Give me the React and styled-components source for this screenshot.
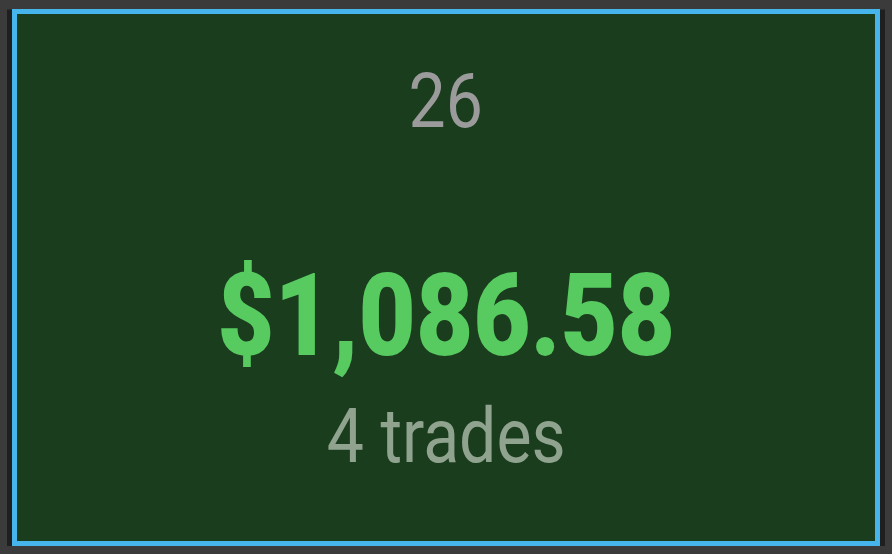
import React from "react";
import styled, { createGlobalStyle } from "styled-components";

const GlobalStyle = createGlobalStyle`
  html, body {
    margin: 0;
    padding: 0;
    background: #3b3b3b;
  }
  body {
    font-family: Roboto, "Liberation Sans", sans-serif;
  }
`;

const Page = styled.div`
  width: 892px;
  height: 554px;
  box-sizing: border-box;
  padding: 9px 7px 8px 7px;
  display: flex;
`;

const Shade = styled.div`
  flex: 1;
  display: flex;
  padding: 0 5px;
  background: linear-gradient(#3b3b3b 0, #1f1f1f 1px);
`;

const Card = styled.div`
  flex: 1;
  box-sizing: border-box;
  border: 5px solid #45b5ec;
  background: #1a3d1e;
  display: flex;
  flex-direction: column;
  align-items: center;
  padding-top: 49px;
`;

const Label = styled.div`
  font-size: ${(p) => p.size}px;
  font-weight: ${(p) => p.weight || 400};
  color: ${(p) => p.color};
  line-height: 1;
  margin-top: ${(p) => p.gap || 0}px;
  transform: scaleX(${(p) => p.squeeze});
  white-space: nowrap;
`;

export default function App() {
  return (
    <>
      <GlobalStyle />
      <Page>
        <Shade>
          <Card>
            <Label size={76} color="#9b9b9b" squeeze={0.87}>
              26
            </Label>
            <Label size={115} weight={900} color="#57cb60" squeeze={0.86} gap={119}>
              $1,086.58
            </Label>
            <Label size={76} color="#8fa38f" squeeze={0.87} gap={25}>
              4 trades
            </Label>
          </Card>
        </Shade>
      </Page>
    </>
  );
}
